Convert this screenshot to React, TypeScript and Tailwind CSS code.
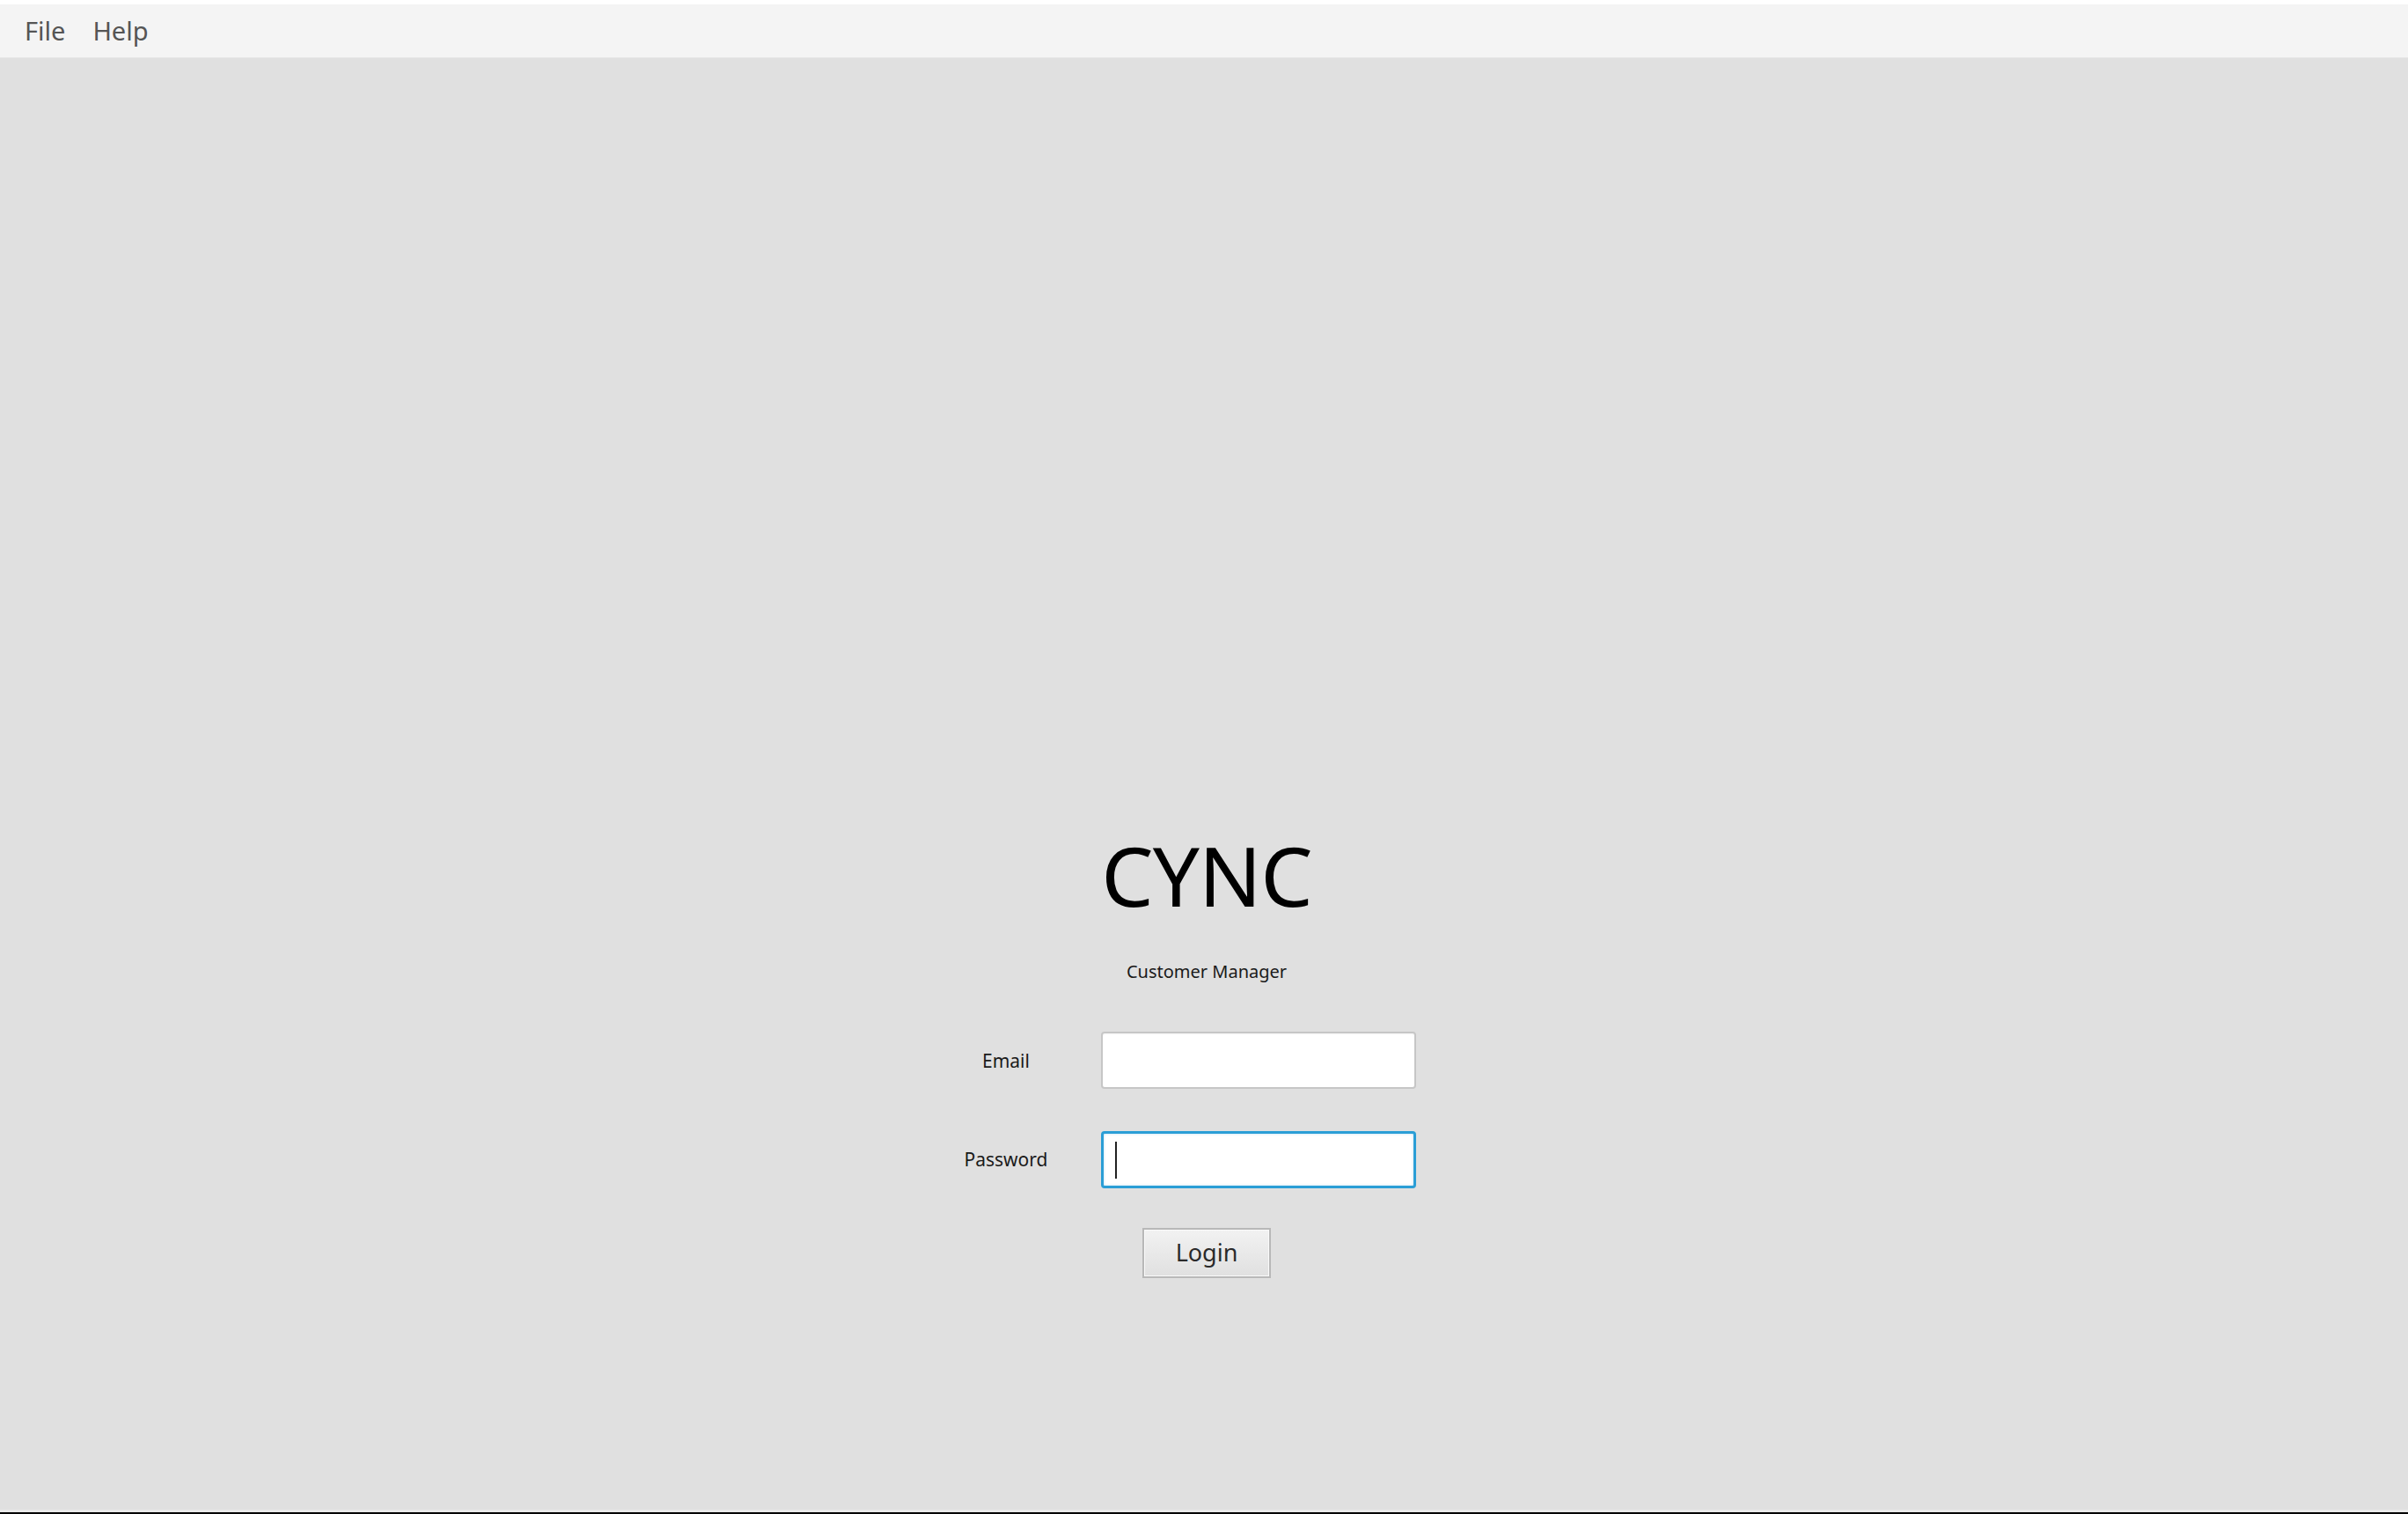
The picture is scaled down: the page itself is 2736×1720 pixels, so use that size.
import React from "react";

export default function App() {
  const font = { fontFamily: '"Noto Sans", "Open Sans", sans-serif' };
  return (
    <div className="w-[2736px] h-[1720px] flex flex-col bg-[#e0e0e0] overflow-hidden" style={font}>
      <div className="h-[5px] bg-white shrink-0" />
      <div className="h-[61px] shrink-0 bg-[#f4f4f4] border-b border-[#e8e8e8] flex items-center pl-[28px] gap-[31px] text-[29px] text-[#555555] leading-none">
        <span className="pb-[2px]">File</span>
        <span className="pb-[2px]">Help</span>
      </div>
      <div className="flex-1 flex flex-col items-center pt-[881px] pl-[6px]">
        <div className="text-[94px] leading-none text-black tracking-[-1px]">CYNC</div>
        <div className="mt-[53px] text-[20px] leading-none text-[#1a1a1a]">Customer Manager</div>
        <div className="mt-[58px] w-[576px] pr-[50px] flex flex-col gap-[48px]">
          <div className="flex items-center">
            <div className="w-[120px] text-center text-[21px] text-[#1a1a1a] leading-none pt-[1px]">Email</div>
            <div className="ml-[48px] w-[358px] h-[65px] bg-white border-2 border-[#c6c6c6] rounded-[4px] shadow-[inset_0_1px_2px_rgba(0,0,0,0.05)]" />
          </div>
          <div className="flex items-center">
            <div className="w-[120px] text-center text-[21px] text-[#1a1a1a] leading-none">Password</div>
            <div className="ml-[48px] w-[358px] h-[65px] bg-white border-[3px] border-[#2b9ed6] rounded-[4px] shadow-[inset_0_0_3px_rgba(43,158,214,0.35)] flex items-center pl-[13px]">
              <div className="w-[2px] h-[42px] bg-[#222]" />
            </div>
          </div>
        </div>
        <div className="mt-[45px] w-[146px] h-[57px] border-2 border-[#b8b8b8] bg-gradient-to-b from-[#f2f2f2] to-[#e0e0e0] shadow-[inset_0_0_0_1px_#fafafa] flex items-center justify-center text-[27px] text-[#2a2a2a] leading-none">
          <span className="pb-[3px]">Login</span>
        </div>
      </div>
      <div className="h-[3px] shrink-0 bg-[#e9e9e9]" />
      <div className="h-[2px] shrink-0 bg-black" />
    </div>
  );
}
